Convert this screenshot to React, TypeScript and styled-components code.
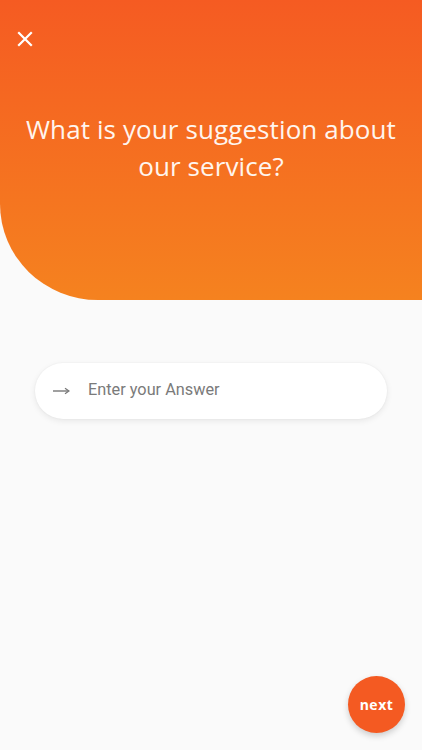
import React from "react";
import styled, { createGlobalStyle } from "styled-components";

const Global = createGlobalStyle`
  html, body { margin: 0; padding: 0; background: #fafafa; }
  * { box-sizing: border-box; }
`;

const Screen = styled.div`
  position: relative;
  width: 422px;
  height: 750px;
  background: #fafafa;
  overflow: hidden;
  display: flex;
  flex-direction: column;
`;

const Header = styled.div`
  height: 300px;
  background: linear-gradient(180deg, #f55b22 0%, #f5821f 100%);
  border-bottom-left-radius: 98px 96px;
  display: flex;
  flex-direction: column;
  padding: 30px 0 0 16px;
`;

const CloseButton = styled.button`
  width: 18px;
  height: 18px;
  padding: 0;
  border: none;
  background: transparent;
  display: flex;
  align-items: center;
  justify-content: center;
  cursor: pointer;
`;

const Title = styled.h1`
  margin: 63px 16px 0 0;
  font-family: "Open Sans", "Lato", sans-serif;
  font-weight: 400;
  font-size: 26px;
  line-height: 37px;
  color: #fff5ee;
  text-align: center;
  letter-spacing: 0.1px;
`;

const Body = styled.div`
  display: flex;
  flex-direction: column;
  align-items: center;
  padding-top: 63px;
`;

const InputPill = styled.label`
  width: 352px;
  height: 56px;
  background: #ffffff;
  border-radius: 28px;
  box-shadow: 0 2px 6px rgba(0, 0, 0, 0.08), 0 0 2px rgba(0, 0, 0, 0.05);
  display: flex;
  align-items: center;
  padding-left: 18px;
  gap: 18px;
`;

const AnswerInput = styled.input`
  flex: 1;
  border: none;
  outline: none;
  background: transparent;
  font-family: Roboto, "Liberation Sans", sans-serif;
  font-size: 16.3px;
  color: #333;
  padding: 0 0 3px 0;
  &::placeholder { color: #7a7a7a; }
`;

const NextButton = styled.button`
  position: absolute;
  right: 17px;
  bottom: 17px;
  width: 57px;
  height: 57px;
  border-radius: 50%;
  border: none;
  background: #f45a22;
  color: #fff;
  font-family: "Open Sans", "Lato", sans-serif;
  font-weight: 700;
  font-size: 14px;
  letter-spacing: 0.5px;
  box-shadow: 0 3px 6px rgba(0, 0, 0, 0.18);
  cursor: pointer;
  padding: 0;
`;

export default function App() {
  return (
    <Screen>
      <Global />
      <Header>
        <CloseButton aria-label="close">
          <svg width="16" height="16" viewBox="0 0 16 16">
            <path d="M2 2 L14 14 M14 2 L2 14" stroke="#fff" strokeWidth="2.2" strokeLinecap="square" />
          </svg>
        </CloseButton>
        <Title>
          What is your suggestion about
          <br />
          our service?
        </Title>
      </Header>
      <Body>
        <InputPill>
          <svg width="17" height="8" viewBox="0 0 17 8">
            <path d="M0 4 H15" stroke="#777" strokeWidth="1.4" />
            <path d="M12 1.2 L16 4 L12 6.8" fill="none" stroke="#777" strokeWidth="1.2" />
          </svg>
          <AnswerInput placeholder="Enter your Answer" />
        </InputPill>
      </Body>
      <NextButton>next</NextButton>
    </Screen>
  );
}
